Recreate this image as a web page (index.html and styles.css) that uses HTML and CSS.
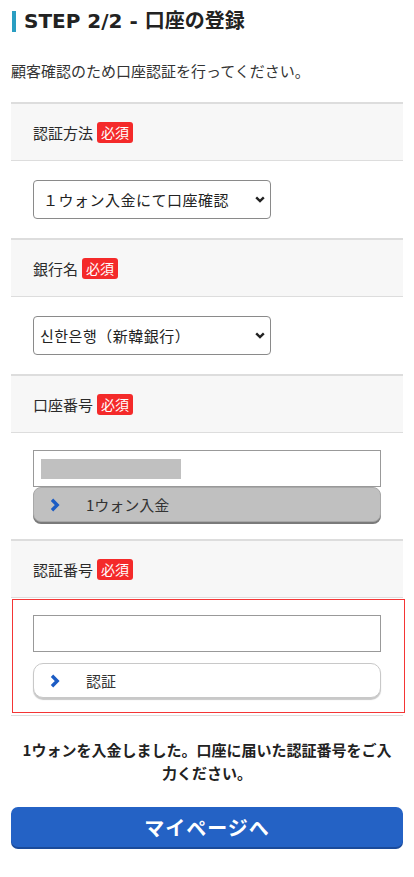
FILE: index.html
```html
<!DOCTYPE html>
<html lang="ja">
<head>
<meta charset="utf-8">
<title>STEP 2/2 - 口座の登録</title>
<link rel="stylesheet" href="styles.css">
</head>
<body>
<div class="page">
  <h1 class="title">STEP 2/2 - 口座の登録</h1>
  <p class="lead">顧客確認のため口座認証を行ってください。</p>

  <div class="form">
    <div class="label">認証方法<span class="req">必須</span></div>
    <div class="field">
      <div class="select-wrap">
        <select class="select">
          <option>１ウォン入金にて口座確認</option>
        </select>
        <svg class="chev" width="10" height="7" viewBox="0 0 10 7"><polyline points="1.2,1.3 5,5 8.8,1.3" fill="none" stroke="#222" stroke-width="2.4"/></svg>
      </div>
    </div>

    <div class="label">銀行名<span class="req">必須</span></div>
    <div class="field">
      <div class="select-wrap">
        <select class="select select-kr">
          <option>신한은행（新韓銀行）</option>
        </select>
        <svg class="chev" width="10" height="7" viewBox="0 0 10 7"><polyline points="1.2,1.3 5,5 8.8,1.3" fill="none" stroke="#222" stroke-width="2.4"/></svg>
      </div>
    </div>

    <div class="label">口座番号<span class="req">必須</span></div>
    <div class="field field-tight">
      <div class="input"><span class="masked"></span></div>
      <button class="btn btn-gray" type="button">
        <svg class="arrow" width="10" height="14" viewBox="0 0 10 14"><polyline points="2,1.8 7.2,7 2,12.2" fill="none" stroke="#1c5cc4" stroke-width="3.4"/></svg>
        <span>1ウォン入金</span>
      </button>
    </div>

    <div class="label">認証番号<span class="req">必須</span></div>
    <div class="field field-err">
      <div class="err-box">
        <input class="input" type="text">
        <button class="btn btn-white" type="button">
          <svg class="arrow" width="10" height="14" viewBox="0 0 10 14"><polyline points="2,1.8 7.2,7 2,12.2" fill="none" stroke="#1c5cc4" stroke-width="3.4"/></svg>
          <span>認証</span>
        </button>
      </div>
    </div>
  </div>

  <p class="msg">1ウォンを入金しました。口座に届いた認証番号をご入力ください。</p>

  <button class="main-btn" type="button">マイページへ</button>
</div>
</body>
</html>
```

FILE: styles.css
```css
* { box-sizing: border-box; }

html, body {
  margin: 0;
  padding: 0;
  background: #fff;
}

body {
  font-family: "Noto Sans CJK JP", "Noto Sans", sans-serif;
  color: #333;
}

.page {
  padding: 0 11px 30px;
}

.title {
  margin: 11px 0 0 1px;
  padding-left: 8px;
  border-left: 4px solid #2a9ec2;
  font-family: "DejaVu Sans", "Noto Sans CJK JP", sans-serif;
  font-size: 20px;
  line-height: 21px;
  font-weight: 700;
  color: #222;
}

.lead {
  margin: 28px 0 0;
  font-size: 15px;
  line-height: 22px;
  color: #333;
}

.form {
  margin-top: 20px;
  border-bottom: 1px solid #ddd;
}

.label {
  display: flex;
  align-items: center;
  height: 59px;
  padding: 0 22px;
  background: #f7f7f7;
  border-top: 2px solid #ddd;
  border-bottom: 1px solid #ddd;
  font-size: 15px;
  color: #2a2a2a;
}

.req {
  display: inline-block;
  margin-left: 4px;
  padding: 0 4px;
  height: 21px;
  line-height: 21px;
  background: #f42a2a;
  color: #fff;
  font-size: 14px;
  border-radius: 3px;
}

.field {
  padding: 19px 22px 19px;
}

.select-wrap {
  position: relative;
  width: 238px;
}

.select {
  display: block;
  width: 238px;
  height: 39px;
  margin: 0;
  padding: 0 24px 0 9px;
  border: 1px solid #8a8a8a;
  border-radius: 4px;
  background: #fff;
  -webkit-appearance: none;
  appearance: none;
  font-family: "Noto Sans CJK JP", sans-serif;
  font-size: 15px;
  letter-spacing: 0.5px;
  color: #222;
}

.select-kr {
  font-family: "Noto Sans CJK KR", "Noto Sans CJK JP", sans-serif;
  padding-left: 6px;
}

.chev {
  position: absolute;
  right: 6px;
  top: 16px;
}

.field-tight {
  padding: 17px 22px 17px;
}

.input {
  display: flex;
  align-items: center;
  width: 348px;
  height: 37px;
  margin: 0;
  padding: 0 7px;
  border: 1px solid #999;
  background: #fff;
  font-size: 15px;
}

.masked {
  display: block;
  width: 140px;
  height: 20px;
  background: #c0c0c0;
}

.btn {
  display: flex;
  align-items: center;
  width: 348px;
  height: 35px;
  margin: 0;
  padding: 0 0 0 16px;
  font-family: "Noto Sans CJK JP", sans-serif;
  font-size: 15px;
  color: #333;
  text-align: left;
  cursor: pointer;
}

.btn .arrow {
  margin-right: 26px;
}

.btn-gray {
  background: #c0c0c0;
  border: 1px solid #a8a8a8;
  border-radius: 8px;
  box-shadow: 0 2px 0 #7a7a7a;
}

.btn-white {
  background: #fff;
  border: 1px solid #c8c8c8;
  border-radius: 10px;
  box-shadow: 0 2px 1px #c8c8c8;
}

.field-err {
  padding: 1px 0 2px 1px;
}

.err-box {
  margin-right: -2px;
  padding: 15px 23px 14px 20px;
  border: 1px solid #f43535;
}

.err-box .input {
  display: block;
  margin-bottom: 11px;
  outline: none;
}

.msg {
  margin: 22px 0 0;
  padding: 0 8px;
  text-align: center;
  font-size: 15px;
  line-height: 23px;
  font-weight: 700;
  color: #222;
}

.main-btn {
  display: block;
  width: 100%;
  height: 40px;
  margin: 23px 0 0;
  padding: 0;
  background: #2462c5;
  border: 0;
  border-radius: 7px;
  box-shadow: 0 2px 0 #1a4a9a;
  color: #fff;
  font-family: "Noto Sans CJK JP", sans-serif;
  font-size: 20px;
  font-weight: 700;
  letter-spacing: 1px;
  cursor: pointer;
}
```
